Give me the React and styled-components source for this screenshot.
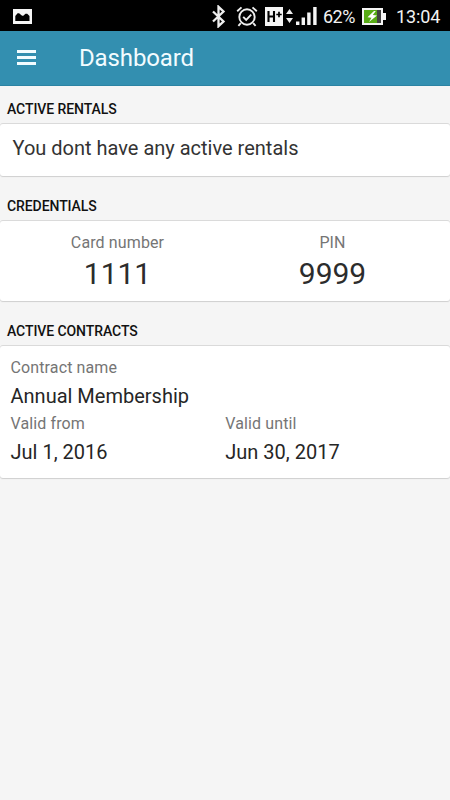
import React from "react";
import styled, { createGlobalStyle } from "styled-components";

const GlobalStyle = createGlobalStyle`
  *, *::before, *::after { box-sizing: border-box; }
  html, body { margin: 0; padding: 0; background: #f5f5f5; }
  body { font-family: Roboto, "Liberation Sans", sans-serif; color: #262626; overflow: hidden; }
`;

const Screen = styled.div`
  display: flex;
  flex-direction: column;
  width: 450px;
  height: 800px;
  background: #f5f5f5;
`;

const StatusBar = styled.header`
  display: flex;
  align-items: center;
  justify-content: space-between;
  height: 31px;
  padding: 1px 10px 0 13px;
  background: #000;
  color: #f2f2f2;
`;

const StatusGroup = styled.div`
  display: flex;
  align-items: center;
`;

const StatusText = styled.span`
  width: ${(p) => p.$width}px;
  margin-left: ${(p) => p.$gap}px;
  font-size: ${(p) => p.$size}px;
  line-height: 28px;
  padding-top: 1px;
  letter-spacing: ${(p) => p.$track || 0}px;
  white-space: nowrap;
`;

const StatusIcon = styled.svg`
  display: block;
  flex: none;
  margin-left: ${(p) => p.$gap || 0}px;
`;

const AppBar = styled.div`
  display: flex;
  align-items: center;
  height: 55px;
  padding-left: 17px;
  background: #338fb0;
  border-bottom: 1px solid #2b83a3;
  color: #f2fcff;
`;

const MenuButton = styled.button`
  display: flex;
  flex-direction: column;
  gap: 3px;
  width: 19px;
  margin: 0 43px 2px 0;
  padding: 0;
  border: 0;
  background: none;
`;

const MenuLine = styled.span`
  height: 3px;
  background: #f2fcff;
`;

const Title = styled.h1`
  margin: 0;
  font-size: 24px;
  font-weight: 400;
  line-height: 54px;
  letter-spacing: -0.13px;
`;

const SectionTitle = styled.h2`
  height: ${(p) => p.$height}px;
  margin: 0;
  padding: 0 7px 4px;
  display: flex;
  align-items: flex-end;
  color: #111;
  font-size: 14px;
  font-weight: 500;
  line-height: 22px;
  letter-spacing: -0.08px;
`;

const Card = styled.section`
  height: ${(p) => p.$height}px;
  padding: ${(p) => p.$padding};
  background: #fff;
  border-radius: 3px;
  box-shadow: 0 -1px 0 #dadada, 0 1px 1px #cfcfcf;
`;

const Message = styled.p`
  margin: 0;
  font-size: 20px;
  line-height: 49px;
  color: #333;
`;

const Columns = styled.div`
  display: grid;
  grid-template-columns: 1fr 1fr;
`;

const Credential = styled.div`
  width: 215px;
  justify-self: ${(p) => p.$side};
  text-align: center;
`;

const Label = styled.div`
  font-size: 16px;
  line-height: 27px;
  letter-spacing: 0.12px;
  color: #757575;
`;

const Value = styled.div`
  padding-top: 1px;
  font-size: 20px;
  line-height: 28px;
  color: #262626;
`;

const Code = styled.div`
  font-size: 30px;
  line-height: 35px;
  color: #2c2c2c;
`;

export default function App() {
  return (
    <Screen>
      <GlobalStyle />
      <StatusBar>
        <StatusIcon width="19" height="15" viewBox="0 0 19 15">
          <rect width="19" height="15" fill="#f5f5f5" />
          <path d="M2.3 12V7L4.6 4.2h1.5l3 2.6h1.2l2.2-2h1.7L16.5 7v5z" fill="#000" />
        </StatusIcon>
        <StatusGroup>
          <StatusIcon width="15" height="23" viewBox="0 0 15 23" fill="none" stroke="#eee" strokeWidth="2.3">
            <path d="M2 6.5l10.5 10-5 4.7V1.8l5 4.7L2 16.5" />
          </StatusIcon>
          <StatusIcon $gap={10} width="22" height="21" viewBox="0 0 22 21" fill="none" stroke="#eee" strokeWidth="1.9">
            <circle cx="11" cy="11" r="7.7" />
            <path d="M1.2 5.2L5.5 1.4M20.8 5.2l-4.3-3.8M4.8 17.2l-2.4 2.6M17.2 17.2l2.4 2.6M7.2 10.8l3 3 5-5.2" />
          </StatusIcon>
          <StatusIcon $gap={7} width="18" height="19" viewBox="0 0 18 19">
            <rect width="18" height="19" fill="#f5f5f5" />
            <path d="M3.5 4v11M9 4v11M3.5 9.5H9" stroke="#000" strokeWidth="2.1" fill="none" />
            <path d="M11.3 7.5h5.4M14 4.8v5.4" stroke="#000" strokeWidth="1.7" fill="none" />
          </StatusIcon>
          <StatusIcon $gap={3} width="7" height="16" viewBox="0 0 7 16" fill="#eee">
            <path d="M0 6l3.5-5L7 6zM0 10h7l-3.5 5z" />
          </StatusIcon>
          <StatusIcon $gap={3} width="21" height="18" viewBox="0 0 21 18" fill="#f5f5f5">
            <path d="M0 14.5h3.4V18H0zM5.6 10.5H9V18H5.6zM11.2 5.5h3.4V18h-3.4zM17.2 0h3.4v18h-3.4z" />
          </StatusIcon>
          <StatusText $gap={6} $width={33} $size={18} $track={-0.5}>62%</StatusText>
          <StatusIcon $gap={6} width="24" height="17" viewBox="0 0 24 17">
            <path d="M0 0h21v5h3v7h-3v5H0z" fill="#f5f5f5" />
            <path d="M2 2h13v13H2z" fill="#58ac16" />
            <path d="M15 2h4v13h-4z" fill="#424242" />
            <path d="M12 3L5.5 9.2l4 .6L7 14l8-6.5-4.2-.5 3-4z" fill="#fff" />
          </StatusIcon>
          <StatusText $gap={10} $width={44} $size={18} $track={-0.1}>13:04</StatusText>
        </StatusGroup>
      </StatusBar>
      <AppBar>
        <MenuButton aria-label="Open menu">
          <MenuLine />
          <MenuLine />
          <MenuLine />
        </MenuButton>
        <Title>Dashboard</Title>
      </AppBar>
      <SectionTitle $height={38}>ACTIVE RENTALS</SectionTitle>
      <Card $height={52} $padding="0 12.5px">
        <Message>You dont have any active rentals</Message>
      </Card>
      <SectionTitle $height={45}>CREDENTIALS</SectionTitle>
      <Card $height={80} $padding="8px 10px">
        <Columns>
          <Credential $side="start">
            <Label>Card number</Label>
            <Code>1111</Code>
          </Credential>
          <Credential $side="end">
            <Label>PIN</Label>
            <Code>9999</Code>
          </Credential>
        </Columns>
      </Card>
      <SectionTitle $height={45}>ACTIVE CONTRACTS</SectionTitle>
      <Card $height={132} $padding="8px 10px 8px 10.5px">
        <Label>Contract name</Label>
        <Value>Annual Membership</Value>
        <Columns>
          <div>
            <Label>Valid from</Label>
            <Value>Jul 1, 2016</Value>
          </div>
          <div>
            <Label>Valid until</Label>
            <Value>Jun 30, 2017</Value>
          </div>
        </Columns>
      </Card>
    </Screen>
  );
}
